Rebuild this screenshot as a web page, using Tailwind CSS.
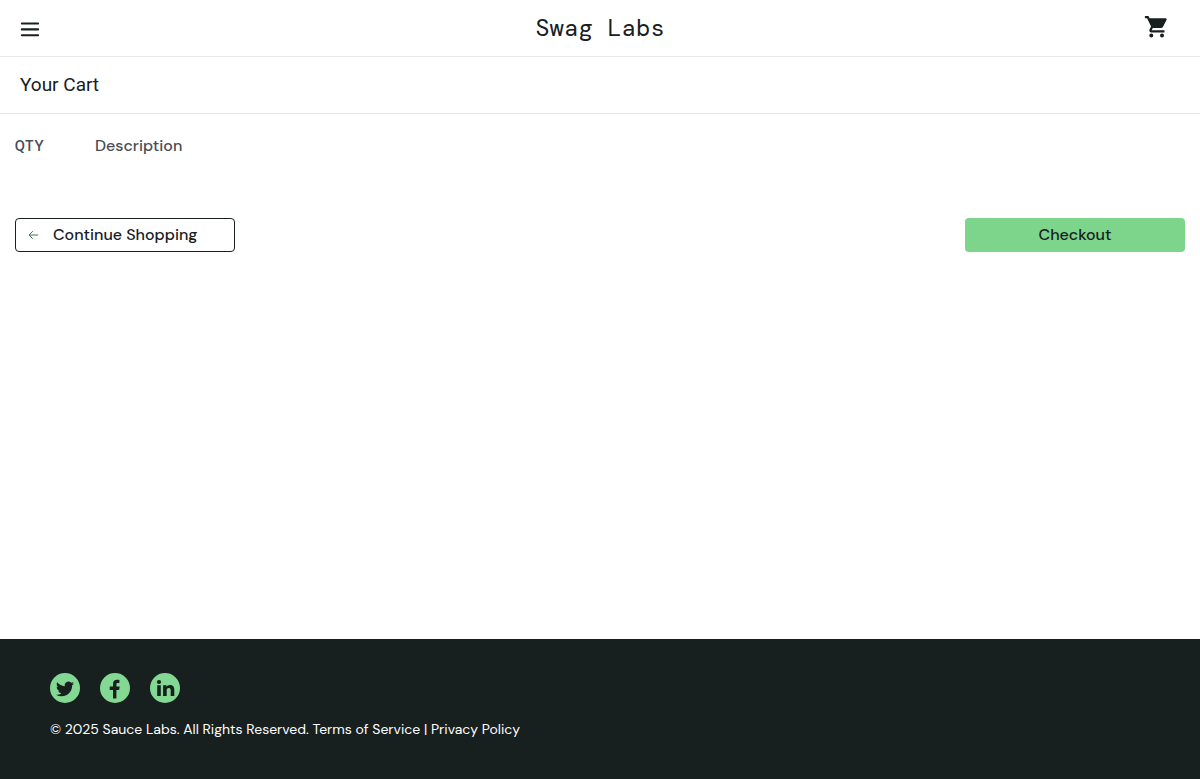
<!DOCTYPE html>
<html lang="en">
<head>
<meta charset="utf-8">
<meta name="viewport" content="width=device-width, initial-scale=1">
<title>Swag Labs</title>
<script src="https://cdn.jsdelivr.net/npm/@tailwindcss/browser@4"></script>
</head>
<body class="flex min-h-screen flex-col bg-white font-['DM_Sans','Inter',sans-serif] text-[#18201f]">
<header>
  <div class="grid h-[57px] grid-cols-[1fr_auto_1fr] items-center border-b border-[#e8e8e8] px-5">
    <button type="button" aria-label="Open Menu" class="mt-1 justify-self-start">
      <svg class="block size-5" viewBox="0 0 20 20" fill="none" stroke="#18201f" stroke-width="2.1" stroke-linecap="round"><path d="M1.9 3.500h16.2M1.900 9.400h16.200M1.900 15.200h16.200"/></svg>
    </button>
    <div class="font-['DM_Mono','Liberation_Mono',monospace] text-2xl">Swag Labs</div>
    <a href="#" aria-label="Shopping cart" class="justify-self-end pb-0.5 pr-3">
      <svg class="block size-6" viewBox="0 0 24 24" fill="#18201f"><path d="M7.300 18.600a2 2 0 1 0 0 4 2 2 0 0 0 0-4zM.900 1v2.200h2.200l4 8.300-1.500 2.700c-.8 1.500.2 3.300 1.900 3.300H20.500v-2.200H8c-.2 0-.3-.2-.2-.4l1-1.800h8.200c.8 0 1.500-.4 1.900-1.100l3.700-7.200A1.100 1.100 0 0 0 21.600 3.200H5.500L4.500 1zM18 18.600a2 2 0 1 0 0 4 2 2 0 0 0 0-4z"/></svg>
    </a>
  </div>
  <div class="flex h-[57px] items-center border-b border-[#e8e8e8] px-5">
    <h1 class="font-['Roboto',sans-serif] text-[19px] font-normal">Your Cart</h1>
  </div>
</header>
<main class="flex-1 px-[15px] pt-5">
  <div class="flex text-base font-medium text-[#484c55]">
    <div class="w-20 font-['DM_Mono','Liberation_Mono',monospace]">QTY</div>
    <div>Description</div>
  </div>
  <div class="mt-15 flex justify-between">
    <button type="button" class="flex h-[34px] w-[220px] items-center gap-[14px] rounded border border-[#18201f] bg-white px-3 text-base font-medium">
      <svg class="size-[11px]" viewBox="0 0 11 11" fill="none" stroke="#477652"><path d="M10.200 5H1M4.800 1.200L1 5l3.800 3.800"/></svg>
      Continue Shopping
    </button>
    <button type="button" class="h-[34px] w-[220px] rounded bg-[#7dd48b] text-base font-medium">Checkout</button>
  </div>
</main>
<footer class="h-[140px] bg-[#18201f] px-[50px] pt-[34px] text-white">
  <div class="flex gap-5">
    <a href="#" aria-label="Twitter" class="grid size-[30px] place-items-center rounded-full bg-[#83d993]">
      <svg class="mt-0.5 size-[18px]" viewBox="0 0 24 24" fill="#18201f"><path d="M23.950 4.570a10 10 0 0 1-2.820.770 4.960 4.960 0 0 0 2.160-2.720c-.950.560-2 .960-3.130 1.180a4.920 4.920 0 0 0-8.380 4.480C7.690 8.100 4.070 6.130 1.640 3.160a4.820 4.820 0 0 0-.670 2.480c0 1.710.870 3.210 2.190 4.100a4.900 4.900 0 0 1-2.230-.620v.060a4.920 4.920 0 0 0 3.950 4.830 5 5 0 0 1-2.210.080 4.940 4.940 0 0 0 4.600 3.420A9.870 9.870 0 0 1 0 19.540a14 14 0 0 0 7.550 2.210c9.050 0 14-7.500 14-13.980l-.020-.640a9.940 9.940 0 0 0 2.420-2.560z"/></svg>
    </a>
    <a href="#" aria-label="Facebook" class="grid size-[30px] place-items-center rounded-full bg-[#83d993]">
      <svg class="size-[30px]" viewBox="0 0 30 30" fill="#18201f"><path d="M13 25.500V17H9.700v-3.600H13v-2.500C13 8.300 14.500 6.800 17 6.800c1.100 0 2.400.2 2.400.2v2.900h-1.500c-1.200 0-1.500.7-1.500 1.400v2.100h3.300l-.6 3.600h-2.700v8.500z"/></svg>
    </a>
    <a href="#" aria-label="LinkedIn" class="grid size-[30px] place-items-center rounded-full bg-[#83d993]">
      <svg class="size-[30px]" viewBox="0 0 30 30" fill="#18201f"><circle cx="9" cy="9" r="2.100"/><path d="M7.200 12.200h3.600v10.900H7.200zM13.100 12.200h3.400v1.500c.5-.9 1.700-1.800 3.500-1.800 3.600 0 4.300 2.300 4.300 5.300v5.900h-3.600v-5.300c0-1.300 0-2.900-1.800-2.900s-2.200 1.400-2.200 2.800v5.400h-3.600z"/></svg>
    </a>
  </div>
  <p class="mt-4 text-sm">© 2025 Sauce Labs. All Rights Reserved. <a href="#">Terms of Service</a> | <a href="#">Privacy Policy</a></p>
</footer>
</body>
</html>
